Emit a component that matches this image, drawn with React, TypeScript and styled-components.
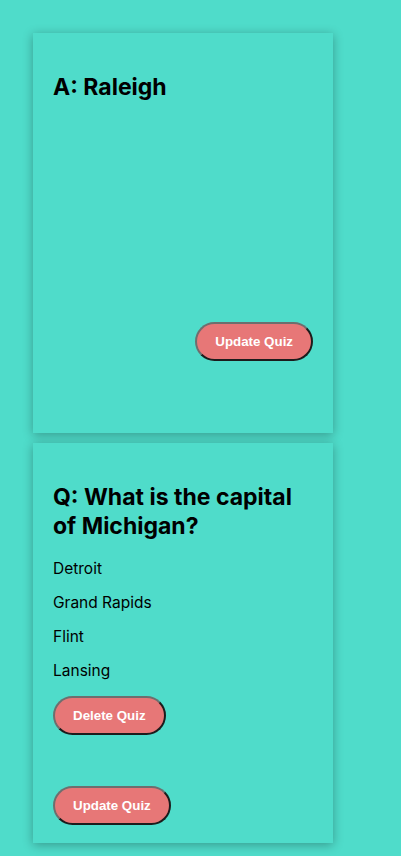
import React from "react";
import styled, { createGlobalStyle } from "styled-components";

const GlobalStyle = createGlobalStyle`
  html, body {
    margin: 0;
    padding: 0;
    background: #4fdcca;
  }
  body {
    font-family: Inter, "Noto Sans", sans-serif;
    color: #000;
  }
`;

const Page = styled.main`
  display: flex;
  flex-direction: column;
  gap: 10px;
  padding: 33px;
  min-height: 856px;
  box-sizing: border-box;
`;

const Card = styled.section`
  box-sizing: border-box;
  width: 300px;
  height: 400px;
  padding: 20px 20px 18px;
  display: flex;
  flex-direction: column;
  background: #4fdcca;
  box-shadow: 0 2px 10px rgba(0, 0, 0, 0.3);
`;

const Title = styled.h2`
  margin: 20px 0;
  font-size: 23px;
  font-weight: 700;
  line-height: 28.5px;
`;

const Option = styled.p`
  margin: 0 0 16px;
  font-size: 15.5px;
  line-height: 18px;
`;

const Footer = styled.div<{ $align?: "start" | "end"; $pad?: number }>`
  margin-top: auto;
  display: flex;
  justify-content: ${(p) => (p.$align === "end" ? "flex-end" : "flex-start")};
  padding-bottom: ${(p) => p.$pad ?? 0}px;
`;

const Row = styled.div`
  display: flex;
`;

const Button = styled.button`
  font-family: "Liberation Sans", Arial, sans-serif;
  font-size: 13.333px;
  font-weight: 700;
  line-height: 15px;
  color: #fff;
  background: #e77777;
  padding: 10px 18px;
  border-radius: 20px;
  border-width: 2px;
  border-style: solid;
  border-color: #6e6e6e #1c1c1c #1c1c1c #6e6e6e;
  cursor: pointer;
`;

export default function App() {
  return (
    <>
      <GlobalStyle />
      <Page>
        <Card>
          <Title>A: Raleigh</Title>
          <Footer $align="end" $pad={54}>
            <Button>Update Quiz</Button>
          </Footer>
        </Card>
        <Card>
          <Title>Q: What is the capital of Michigan?</Title>
          {["Detroit", "Grand Rapids", "Flint", "Lansing"].map((o) => (
            <Option key={o}>{o}</Option>
          ))}
          <Row>
            <Button>Delete Quiz</Button>
          </Row>
          <Footer>
            <Button>Update Quiz</Button>
          </Footer>
        </Card>
      </Page>
    </>
  );
}
